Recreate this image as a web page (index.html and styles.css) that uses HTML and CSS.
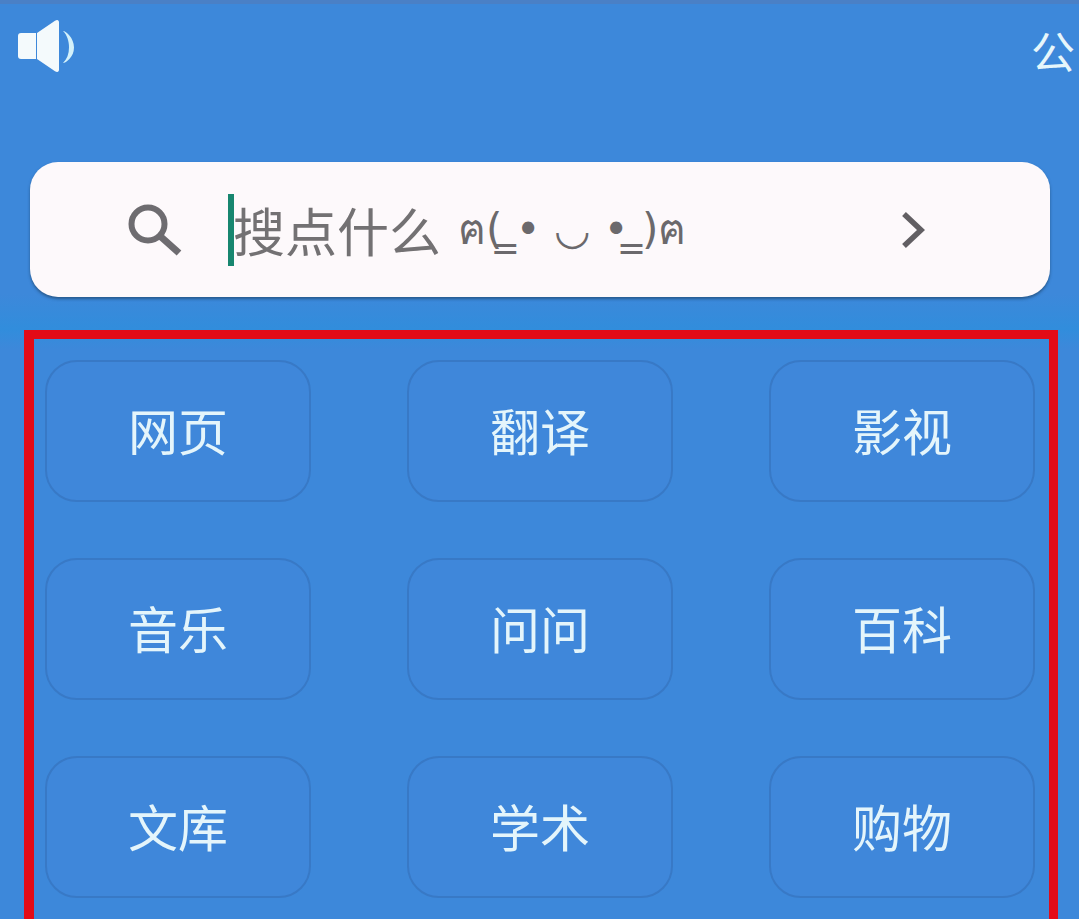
FILE: index.html
```html
<!DOCTYPE html>
<html lang="zh-CN">

<head>
    <meta charset="UTF-8">
    <meta name="viewport" content="width=device-width, initial-scale=1.0">
    <title>搜索</title>
    <link rel="stylesheet" href="styles.css">
</head>

<body>
    <div class="page">
        <div class="topbar">
            <svg class="speaker" viewBox="0 0 57 52" aria-hidden="true">
                <path d="M3 13h15v26H3a3 3 0 0 1-3-3V16a3 3 0 0 1 3-3z" fill="#f4fafc" />
                <path d="M19 13 37 .8c2.500-1.600 4-.5 4 1.700v47c0 2.200-1.500 3.300-4 1.700L19 39z" fill="#f4fafc" />
                <path d="M45 11c3 0 11 7 11 16.500S48 43 45 43c4-4 6-9 6-15.500S49 15 45 11z" fill="#d3f1fa" />
            </svg>
            <span class="notice">公</span>
        </div>

        <div class="search">
            <svg class="search-icon" viewBox="0 0 54 52" aria-hidden="true">
                <circle cx="20" cy="20" r="16.500" fill="none" stroke="#6e6c70" stroke-width="6" />
                <path d="M32 32 51 49" fill="none" stroke="#6e6c70" stroke-width="7" />
            </svg>
            <span class="caret"></span>
            <span class="placeholder">搜点什么</span>
            <span class="kaomoji">ฅ( ̳• ◡ • ̳)ฅ</span>
            <svg class="chevron" viewBox="0 0 24 36" aria-hidden="true">
                <path d="M3 2 20 18 3 34" fill="none" stroke="#625f63" stroke-width="5.500" />
            </svg>
        </div>

        <div class="panel">
            <div class="grid">
                <a class="tile">网页</a>
                <a class="tile">翻译</a>
                <a class="tile">影视</a>
                <a class="tile">音乐</a>
                <a class="tile">问问</a>
                <a class="tile">百科</a>
                <a class="tile">文库</a>
                <a class="tile">学术</a>
                <a class="tile">购物</a>
            </div>
        </div>
    </div>
</body>

</html>
```

FILE: styles.css
```css
* {
    margin: 0;
    padding: 0;
    box-sizing: border-box;
    font-family: "Noto Sans CJK SC", "Noto Sans", sans-serif;
}

html,
body {
    height: 100%;
    overflow: hidden;
}

body {
    background-color: #3d88da;
}

.page {
    height: 919px;
    overflow: hidden;
    border-top: 4px solid #4a80c6;
    background: linear-gradient(#3d88da 290px, #318ddc 325px, #3d88da 345px);
}

.topbar {
    height: 158px;
    display: flex;
    justify-content: space-between;
    align-items: flex-start;
    padding: 16px 4px 0 18px;
}

.speaker {
    width: 57px;
    height: 52px;
}

.notice {
    font-size: 44px;
    line-height: 44px;
    margin-top: 8px;
    color: #e6f6fb;
}

.search {
    height: 135px;
    margin: 0 29px 0 30px;
    display: flex;
    align-items: center;
    padding-left: 98px;
    background-color: #fdf9fb;
    border-radius: 28px;
    box-shadow: 0 2px 3px rgba(30, 70, 110, 0.7);
}

.search-icon {
    width: 54px;
    height: 52px;
    margin-right: 46px;
    flex: none;
}

.caret {
    width: 6px;
    height: 72px;
    margin-right: -1px;
    background-color: #17866f;
    flex: none;
}

.placeholder {
    font-size: 52px;
    line-height: 72px;
    color: #737173;
}

.kaomoji {
    font-size: 42px;
    line-height: 72px;
    margin-left: 17px;
    color: #6b696c;
    font-family: "DejaVu Sans", "Noto Sans CJK SC", sans-serif;
}

.chevron {
    width: 24px;
    height: 36px;
    margin-left: auto;
    margin-right: 125px;
    flex: none;
}

.panel {
    margin: 33px 21px 0 24px;
    height: 620px;
    border: solid #e30b17;
    border-width: 9px 9px 0 10px;
    padding: 21px 13px 0 11px;
}

.grid {
    display: grid;
    grid-template-columns: repeat(3, 266px);
    grid-auto-rows: 142px;
    column-gap: 96px;
    row-gap: 56px;
}

.tile {
    display: flex;
    justify-content: center;
    align-items: center;
    padding-bottom: 5px;
    font-size: 50px;
    color: #e4f5fb;
    background-color: #3f87da;
    border: 2px solid #3879c6;
    border-radius: 32px;
}
```
